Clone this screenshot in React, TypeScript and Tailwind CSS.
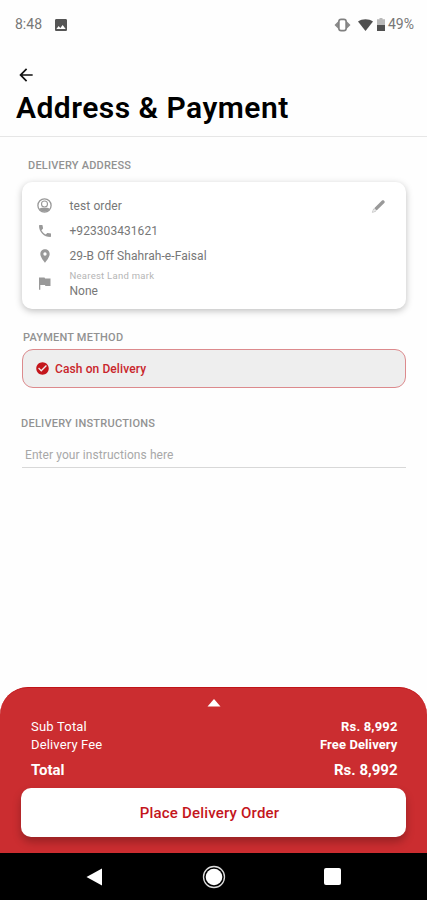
import React from 'react'
import clsx from 'clsx'
import { MdArrowBack, MdCheckCircle, MdImage, MdLocationOn, MdPhone } from 'react-icons/md'

type SummaryRow = {
  label: string
  value: string
  className: string
  labelClassName: string
  valueClassName: string
}

const summaryRows: SummaryRow[] = [
  {
    label: 'Sub Total',
    value: 'Rs. 8,992',
    className: 'h-[18px] text-[13px]',
    labelClassName: 'tracking-[0.2px]',
    valueClassName: 'font-bold tracking-[0.15px]',
  },
  {
    label: 'Delivery Fee',
    value: 'Free Delivery',
    className: 'h-[18px] text-[13px]',
    labelClassName: 'tracking-[0.15px]',
    valueClassName: 'font-bold tracking-[0.1px]',
  },
  {
    label: 'Total',
    value: 'Rs. 8,992',
    className: 'mt-[7px] h-[18px] text-[15px]',
    labelClassName: 'font-bold',
    valueClassName: 'font-bold',
  },
]

const StatusBar: React.FC = () => (
  <div className="flex h-12 shrink-0 items-center pl-[15px] pr-[13px] pt-px text-[14px] text-[#777]">
    <span className="w-[27px]">8:48</span>
    <MdImage className="ml-[10.5px] size-4 text-[#555]" />
    <div className="ml-auto flex items-center">
      <svg width="17" height="14" viewBox="0 0 17 14" fill="none">
        <path d="M5 2.500L.5 7 5 11.500zM12 2.500L16.500 7 12 11.500z" fill="#8a8a8a" />
        <rect x="4.900" y="1.400" width="7.200" height="11.200" rx="2.200" fill="#fff" stroke="#808080" strokeWidth="1.600" />
      </svg>
      <svg className="ml-[7px]" width="15" height="12" viewBox="0 0 15 12">
        <path d="M0 2.600C4.400-.6 10.600-.6 15 2.600L7.500 12z" fill="#505050" />
      </svg>
      <svg className="ml-1" width="8" height="13" viewBox="0 0 8 13">
        <path d="M2.500 0h3v1.300H8V7H0V1.300h2.500z" fill="#b9b9b9" />
        <path d="M0 7h8v6H0z" fill="#505050" />
      </svg>
      <span className="ml-[3px]">49%</span>
    </div>
  </div>
)

const UserIcon: React.FC = () => (
  <svg className="size-[15px]" viewBox="0 0 15 15" fill="none">
    <circle cx="7.500" cy="7.500" r="6.600" stroke="#999" strokeWidth="1.300" />
    <circle cx="7.500" cy="6" r="3" stroke="#999" strokeWidth="1.100" />
    <path d="M2.200 10.800C4 9.400 5.500 9.700 7.500 9.700s3.500-.3 5.300 1.100c-1.300 2.100-3.200 3-5.300 3s-4-.9-5.300-3z" fill="#999" />
  </svg>
)

const FlagIcon: React.FC = () => (
  <svg className="ml-[2px]" width="12" height="13" viewBox="0 0 12 13">
    <path d="M0 .5h5.500l.6 1H11.500v7.500H6.500l-.6-.9H1.300v4.700H0z" fill="#999" />
  </svg>
)

const PencilIcon: React.FC = () => (
  <svg className="mr-[20px] mt-[5px] size-[16px]" viewBox="0 0 16 16">
    <path d="M4.200 10.200l7.800-7.600c.6-.6 1.300-.6 1.900 0l.4.4c.6.6.6 1.300 0 1.900l-7.700 7.700z" fill="#999" />
    <path d="M3.600 11l2.200 2.200-3.400 1.200z" fill="none" stroke="#c4c4c4" strokeWidth=".9" />
  </svg>
)

const AddressCard: React.FC = () => (
  <div className="flex h-[127px] rounded-[10px] bg-white pl-[15px] pt-[11px] text-[12px] text-[#777] shadow-[0_2px_7px_rgba(0,0,0,0.25)]">
    <div className="flex-1">
      <div className="flex h-[25px] items-center">
        <div className="flex w-[32.5px]">
          <UserIcon />
        </div>
        <span className="tracking-[0.1px]">test order</span>
      </div>
      <div className="flex h-[25px] items-center">
        <div className="flex w-[32.5px]">
          <MdPhone className="size-[16px] text-[#999]" />
        </div>
        <span className="tracking-[0.06px]">+923303431621</span>
      </div>
      <div className="flex h-[26px] items-center">
        <div className="flex w-[32.5px]">
          <MdLocationOn className="size-[16px] text-[#999]" />
        </div>
        <span className="tracking-[0.08px]">29-B Off Shahrah-e-Faisal</span>
      </div>
      <div className="flex h-[30px] items-center">
        <div className="flex w-[32.5px] pb-[1px]">
          <FlagIcon />
        </div>
        <div>
          <p className="h-[15px] text-[9.5px] leading-[13px] tracking-[0.26px] text-[#b5b5b5]">Nearest Land mark</p>
          <p className="h-[15px] leading-[15px]">None</p>
        </div>
      </div>
    </div>
    <PencilIcon />
  </div>
)

const OrderSummary: React.FC = () => (
  <section className="flex h-[166px] shrink-0 flex-col rounded-t-[28px] border-t border-[#c01418] bg-[#cb2d30] px-[21px] text-white">
    <svg className="mx-auto mt-[11px] shrink-0" width="14" height="8" viewBox="0 0 14 8">
      <path d="M7 0l6.500 7.500H.5z" fill="#fff" />
    </svg>
    <div className="mt-[11px] pl-[10px] pr-[8.500px]">
      {summaryRows.map((row) => (
        <div key={row.label} className={clsx('flex items-center justify-between', row.className)}>
          <span className={row.labelClassName}>{row.label}</span>
          <span className={row.valueClassName}>{row.value}</span>
        </div>
      ))}
    </div>
    <button className="mt-[8.500px] h-[49px] shrink-0 rounded-[10px] bg-white pr-[8px] pt-[2px] text-[15px] font-medium tracking-[0.2px] text-[#c4161c] shadow-[0_5px_8px_rgba(0,0,0,0.25)]">
      Place Delivery Order
    </button>
  </section>
)

const NavigationBar: React.FC = () => (
  <nav className="flex h-[47px] shrink-0 items-center justify-between bg-black pl-[86px] pr-[86px]">
    <svg width="17" height="18" viewBox="0 0 17 18">
      <path d="M16 .5v17L.5 9z" fill="#fff" />
    </svg>
    <svg width="24" height="24" viewBox="0 0 24 24">
      <circle cx="12" cy="12" r="10.500" fill="none" stroke="#ddd" strokeWidth="1.300" />
      <circle cx="12" cy="12" r="8.300" fill="#fff" />
    </svg>
    <div className="size-[17px] rounded-[2px] bg-white" />
  </nav>
)

const App: React.FC = () => {
  return (
    <div className="flex h-[900px] w-[427px] flex-col overflow-hidden bg-[#fefefe] font-[Roboto,sans-serif]">
      <StatusBar />
      <header className="flex h-[89px] shrink-0 flex-col border-b border-[#e6e6e6] pl-[16px] pt-[17px]">
        <MdArrowBack className="size-5 text-[#111]" />
        <h1 className="mt-[5px] text-[30px] leading-9 font-semibold tracking-[0.48px] text-black">
          Address &amp; Payment
        </h1>
      </header>

      <main className="flex flex-1 flex-col pl-[22px] pr-[21px]">
        <h2 className="mt-[21px] pl-[6px] text-[11px] leading-4 font-medium tracking-[0.2px] text-[#929292]">
          DELIVERY ADDRESS
        </h2>
        <div className="mt-2">
          <AddressCard />
        </div>

        <h2 className="mt-[21px] pl-px text-[11px] leading-4 font-medium tracking-[0.2px] text-[#929292]">
          PAYMENT METHOD
        </h2>
        <div className="mt-[3px] flex h-[39px] items-center rounded-[11px] border border-[#dc8a8d] bg-[#eee] pl-[12px]">
          <MdCheckCircle className="size-[15px] text-[#c4161c]" />
          <span className="ml-[5px] text-[12px] font-medium tracking-[0.1px] text-[#c9252b]">Cash on Delivery</span>
        </div>

        <h2 className="-ml-px mt-[28px] text-[11px] leading-4 font-medium tracking-[0.24px] text-[#929292]">
          DELIVERY INSTRUCTIONS
        </h2>
        <input
          className="mt-[11px] h-[25px] border-b border-[#d8d8d8] pl-[3px] text-[12px] tracking-[0.08px] outline-none placeholder:text-[#a8a8a8]"
          placeholder="Enter your instructions here"
        />
      </main>

      <OrderSummary />
      <NavigationBar />
    </div>
  )
}

export default App
